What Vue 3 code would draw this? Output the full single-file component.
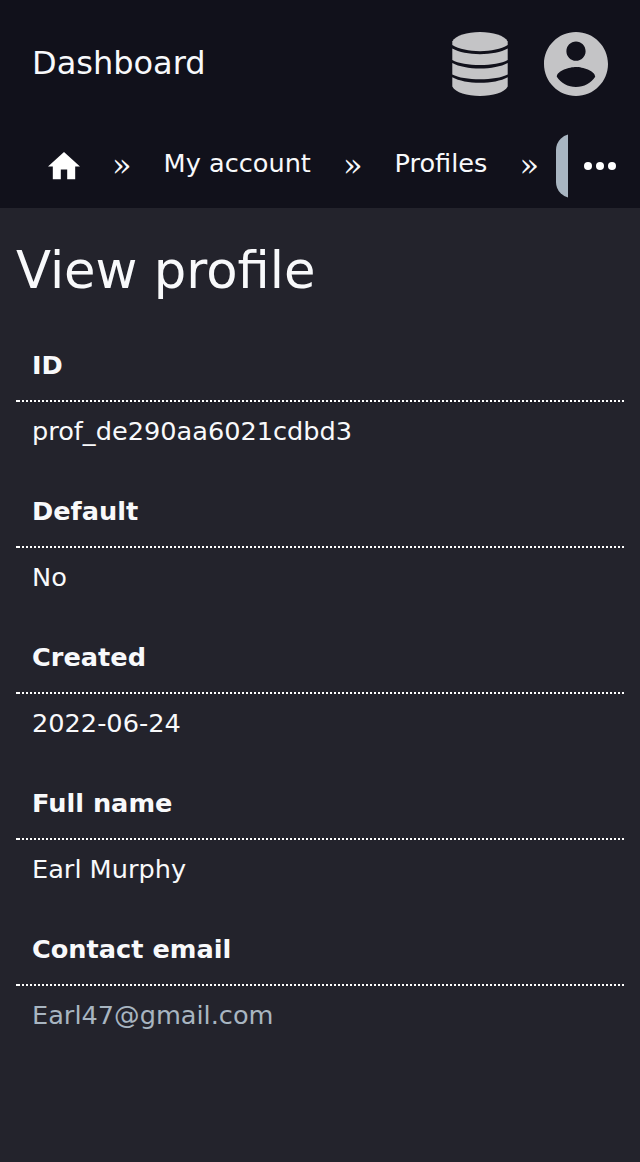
<script setup>
const fields = [
  { label: 'ID', value: 'prof_de290aa6021cdbd3' },
  { label: 'Default', value: 'No' },
  { label: 'Created', value: '2022-06-24' },
  { label: 'Full name', value: 'Earl Murphy' },
  { label: 'Contact email', value: 'Earl47@gmail.com', link: true },
]
</script>

<template>
  <div class="page">
    <header class="top">
      <span class="brand">Dashboard</span>
      <div class="actions">
        <svg class="icon" viewBox="0 0 64 64">
          <path d="M4.300 9.500C7.500 3.500 19 0 32 0s24.500 3.500 27.700 9.500V13C53 17 43 19.200 32 19.200S11 17 4.300 13z" />
          <path d="M4.300 16.500C11 20.200 21 22.200 32 22.200s21-2 27.700-5.700V28C54 31.200 43 33 32 33S10 31.200 4.300 28z" />
          <path d="M4.300 31C11 34.600 21 36.500 32 36.500s21-1.900 27.700-5.500v11.500C54 45.600 43 47.300 32 47.300S10 45.600 4.300 42.500z" />
          <path d="M4.300 45.300C11 49 21 50.800 32 50.800s21-1.800 27.700-5.500v9.200C56.500 60.500 45 64 32 64S7.500 60.500 4.300 54.500z" />
        </svg>
        <svg class="icon" viewBox="2 2 20 20">
          <path d="M12 2C6.480 2 2 6.480 2 12s4.480 10 10 10 10-4.480 10-10S17.520 2 12 2zm0 3c1.660 0 3 1.340 3 3s-1.340 3-3 3-3-1.340-3-3 1.340-3 3-3zm0 14.200c-2.500 0-4.710-1.280-6-3.220.03-1.990 4-3.080 6-3.080 1.990 0 5.970 1.090 6 3.080-1.290 1.940-3.500 3.220-6 3.220z" />
        </svg>
      </div>
    </header>
    <nav class="crumbs">
      <div class="trail">
        <a class="home"><svg viewBox="2 3 20 17"><path d="M10 20v-6h4v6h5v-8h3L12 3 2 12h3v8z" /></svg></a>
        <span class="sep">»</span>
        <a class="crumb">My account</a>
        <span class="sep">»</span>
        <a class="crumb">Profiles</a>
        <span class="sep">»</span>
        <a class="current"></a>
      </div>
      <svg class="more" viewBox="0 0 32 8"><circle cx="4" cy="4" r="4" /><circle cx="16" cy="4" r="4" /><circle cx="28" cy="4" r="4" /></svg>
    </nav>
    <main>
      <h1>View profile</h1>
      <dl>
        <template v-for="f in fields" :key="f.label">
          <dt>{{ f.label }}</dt>
          <dd :class="{ link: f.link }">{{ f.value }}</dd>
        </template>
      </dl>
    </main>
  </div>
</template>

<style>
body { background: #23232c; }
</style>

<style scoped>
.page {
  min-height: 1162px;
  background: #23232c;
  color: #f8f9fb;
  font: 25.6px/30px "DejaVu Sans", sans-serif;
}
.top {
  height: 128px;
  box-sizing: border-box;
  padding: 0 32px;
  display: flex;
  align-items: center;
  justify-content: space-between;
  background: #11111b;
}
.brand { font-size: 32px; line-height: 38px; margin-top: -2px; }
.actions { display: flex; gap: 32px; }
.icon { width: 64px; height: 64px; fill: #c4c4c6; }
.crumbs {
  height: 80px;
  display: flex;
  background: #11111b;
}
.trail {
  width: 520px;
  padding-left: 48px;
  display: flex;
  overflow: hidden;
}
.home { width: 32px; padding-top: 24.4px; }
.home svg { display: block; width: 32px; height: 27.2px; fill: #fff; }
.sep {
  width: 20px;
  margin-left: 32px;
  padding-top: 21px;
  font: 32px/32px "DejaVu Serif", serif;
}
.crumb { margin-left: 32px; padding-top: 20px; white-space: nowrap; }
.current {
  flex: none;
  width: 120px;
  height: 64px;
  margin: 6px 0 0 17px;
  border-radius: 16px;
  background: #a8b5c1;
}
.more { width: 32px; height: 8px; margin: 34px 0 0 16px; fill: #fff; }
main { padding: 0 16px; }
h1 { margin: 0; padding-top: 32px; font-size: 51.2px; line-height: 60px; font-weight: 400; }
dl { margin: 30px 0 0; }
dt {
  height: 72px;
  padding: 0 16px;
  line-height: 70px;
  font-weight: 700;
  background:
    linear-gradient(#fff, #fff) left bottom / 2px 2px no-repeat,
    repeating-linear-gradient(90deg, transparent 0 2px, #fff 2px 4px) left bottom / 100% 2px no-repeat;
}
dd { margin: 0; height: 74px; padding: 0 16px; line-height: 58px; }
.link { color: #a8b5c1; }
</style>
